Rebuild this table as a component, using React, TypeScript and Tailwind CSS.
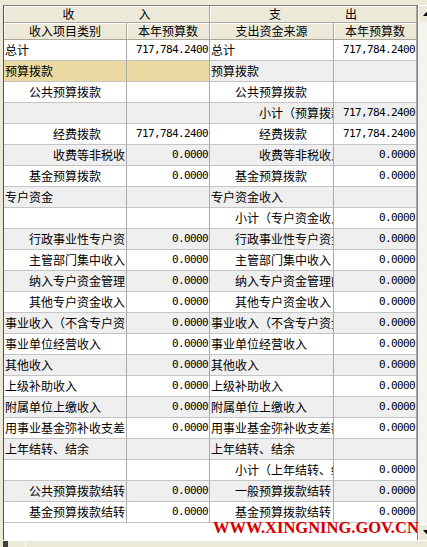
import React from "react";

type Row = [string, number, string, string, number, string];

// labels are cut where the grid cell cuts them in the original
const rows: Row[] = [
  ["总计", 0, "717,784.2400", "总计", 0, "717,784.2400"],
  ["预算拨款", 0, "", "预算拨款", 0, ""],
  ["公共预算拨款", 1, "", "公共预算拨款", 1, ""],
  ["", 0, "", "小计（预算拨款", 2, "717,784.2400"],
  ["经费拨款", 2, "717,784.2400", "经费拨款", 2, "717,784.2400"],
  ["收费等非税收", 2, "0.0000", "收费等非税收入", 2, "0.0000"],
  ["基金预算拨款", 1, "0.0000", "基金预算拨款", 1, "0.0000"],
  ["专户资金", 0, "", "专户资金收入", 0, ""],
  ["", 0, "", "小计（专户资金收入", 1, "0.0000"],
  ["行政事业性专户资", 1, "0.0000", "行政事业性专户资金", 1, "0.0000"],
  ["主管部门集中收入", 1, "0.0000", "主管部门集中收入", 1, "0.0000"],
  ["纳入专户资金管理", 1, "0.0000", "纳入专户资金管理的", 1, "0.0000"],
  ["其他专户资金收入", 1, "0.0000", "其他专户资金收入", 1, "0.0000"],
  ["事业收入（不含专户资", 0, "0.0000", "事业收入（不含专户资金", 0, "0.0000"],
  ["事业单位经营收入", 0, "0.0000", "事业单位经营收入", 0, "0.0000"],
  ["其他收入", 0, "0.0000", "其他收入", 0, "0.0000"],
  ["上级补助收入", 0, "0.0000", "上级补助收入", 0, "0.0000"],
  ["附属单位上缴收入", 0, "0.0000", "附属单位上缴收入", 0, "0.0000"],
  ["用事业基金弥补收支差", 0, "0.0000", "用事业基金弥补收支差额", 0, "0.0000"],
  ["上年结转、结余", 0, "", "上年结转、结余", 0, ""],
  ["", 0, "", "小计（上年结转、结", 1, "0.0000"],
  ["公共预算拨款结转", 1, "0.0000", "一般预算拨款结转", 1, "0.0000"],
  ["基金预算拨款结转", 1, "0.0000", "基金预算拨款结转", 1, "0.0000"],
];

const pad = ["pl-[1px]", "pl-[25px]", "pl-[49px]"];

const head =
  "flex items-center justify-center border-r border-b border-[#ACA899] bg-[#ECE9D8] shadow-[inset_1px_1px_0_#ffffff]";
const cell =
  "h-[21px] overflow-hidden whitespace-nowrap border-r border-b border-r-[#A8A8A8] border-b-[#C4C4C4] leading-[20px]";
const num =
  "flex items-center justify-end pr-[1px] font-['DejaVu_Sans_Mono',monospace] text-[11px] tracking-[-0.62px]";

function Label({ text, lvl, bg }: { text: string; lvl: number; bg: string }) {
  return <div className={`${cell} ${pad[lvl]} ${bg}`}>{text}</div>;
}

function Value({ text, bg }: { text: string; bg: string }) {
  return <div className={`${cell} ${num} ${bg}`}>{text}</div>;
}

export default function App() {
  return (
    <div className="relative h-[547px] w-[427px] overflow-hidden bg-[#ECE9D8] pt-[5px] pl-[3px] font-['Noto_Sans_CJK_SC',sans-serif] text-[12px] text-black">
      <div className="flex h-[535px]">
        {/* grid */}
        <div className="flex w-[414px] flex-col border-l border-t border-l-[#505050] border-t-[#808080] bg-white">
          <div className="grid grid-cols-[123px_83px_124px_83px]">
            <div className={`${head} col-span-2 h-[17px] gap-[64px]`}>
              <span>收</span>
              <span>入</span>
            </div>
            <div className={`${head} col-span-2 h-[17px] gap-[64px]`}>
              <span>支</span>
              <span>出</span>
            </div>
            <div className={`${head} h-[17px]`}>收入项目类别</div>
            <div className={`${head} h-[17px]`}>本年预算数</div>
            <div className={`${head} h-[17px]`}>支出资金来源</div>
            <div className={`${head} h-[17px]`}>本年预算数</div>
            {rows.map((r, i) => {
              const bg = i % 2 === 0 ? "bg-white" : "bg-[#EFEFEF]";
              const leftBg = i === 1 ? "bg-[#EBD9A2]" : bg;
              return (
                <React.Fragment key={i}>
                  <Label text={r[0]} lvl={r[1]} bg={leftBg} />
                  <Value text={r[2]} bg={leftBg} />
                  <Label text={r[3]} lvl={r[4]} bg={bg} />
                  <Value text={r[5]} bg={bg} />
                </React.Fragment>
              );
            })}
          </div>
        </div>
        {/* vertical scrollbar, cut by the window edge */}
        <div className="flex w-[17px] shrink-0 flex-col border-l border-[#808080] bg-[#F4F3EE]">
          <div className="flex h-[17px] items-center justify-center bg-[#ECE9D8] shadow-[inset_1px_1px_0_#ffffff]">
            <svg width="7" height="4" viewBox="0 0 7 4">
              <path d="M3.5 0 L7 4 L0 4 Z" fill="#000" />
            </svg>
          </div>
          <div className="flex-1" />
          <div className="flex h-[16px] items-center justify-center bg-[#ECE9D8] shadow-[inset_1px_1px_0_#ffffff]">
            <svg width="7" height="4" viewBox="0 0 7 4">
              <path d="M0 0 L7 0 L3.5 4 Z" fill="#000" />
            </svg>
          </div>
        </div>
      </div>
      {/* horizontal scrollbar edge */}
      <div className="flex h-[7px] border-t border-[#ffffff] bg-[#ECE9D8]">
        <div className="w-[5px] bg-[#404040]" />
        <div className="ml-[17px] w-px bg-[#ffffff]" />
      </div>
      <div className="absolute left-[213px] top-[522px] font-['Liberation_Serif',serif] text-[16.5px] font-bold leading-[12px] text-[#D40000] [text-shadow:0_0_1px_#ffd0d0]">
        WWW.XINGNING.GOV.CN
      </div>
    </div>
  );
}
